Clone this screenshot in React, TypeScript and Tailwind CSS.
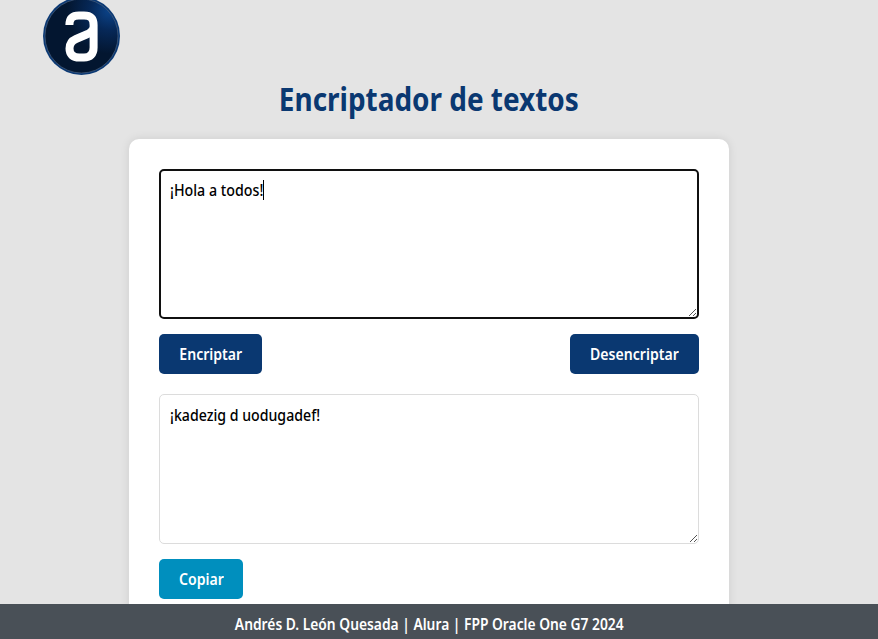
function Grip() {
  return (
    <svg className="absolute bottom-0 right-0 h-[9px] w-[9px]" viewBox="0 0 9 9" stroke="#555" strokeWidth="1" fill="none">
      <path d="M1 8 8 1M5 8 8 5" />
    </svg>
  );
}

function Logo() {
  return (
    <svg className="-mt-[3px] ml-[43px] h-[78px] w-[77px] shrink-0" viewBox="0 0 77 78">
      <defs>
        <radialGradient id="disc" cx="0.88" cy="0.16" r="0.58">
          <stop offset="0" stopColor="#0b4389" />
          <stop offset="0.45" stopColor="#062858" />
          <stop offset="1" stopColor="#031630" />
        </radialGradient>
      </defs>
      <ellipse cx="38.5" cy="39" rx="38.5" ry="39" fill="#0b3974" />
      <ellipse cx="38.5" cy="39" rx="36.5" ry="37" fill="url(#disc)" stroke="#526682" strokeWidth="0.6" />
      <path
        d="M26.4 28C26.4 21.5 29.5 18.4 36 18.4H41C47.5 18.4 50.6 21.6 50.6 28V50.5C50.6 57.2 47.2 60.6 41 60.6H36.3C29.8 60.6 26.5 57.3 26.5 51.5C26.5 46.3 28.8 43.8 33 42L43.5 37.5C47 36 50 34.5 50.6 30"
        fill="none"
        stroke="#fff"
        strokeWidth="8"
      />
    </svg>
  );
}

const button = "flex h-10 items-center justify-center rounded-[5px] pb-px text-base font-semibold text-white";

export default function App() {
  return (
    <div className="relative flex h-[639px] w-[878px] flex-col overflow-hidden bg-[#e4e4e4] font-['Noto_Sans','Open_Sans',sans-serif]">
      <header className="flex h-[75px]">
        <Logo />
      </header>
      <main className="flex w-[858px] flex-1 flex-col items-center">
        <h1 className="flex h-[64px] w-[300px] items-start justify-center whitespace-nowrap pt-[4px] text-[32px] font-bold leading-[40px] text-[#0a3871]">
          <span className="inline-block scale-x-[0.873]">Encriptador de textos</span>
        </h1>
        <section className="flex h-[540px] w-[600px] shrink-0 flex-col rounded-[10px] bg-white p-[30px] shadow-[0_0_10px_rgba(0,0,0,0.1)]">
          <div className="relative h-[150px] shrink-0 rounded-[5px] border-2 border-[#101010] pl-[9px] pt-[9px]">
            <div className="flex h-5 w-[94px] items-center border-r border-black">
              <span className="inline-block origin-left scale-x-[0.89] whitespace-nowrap text-base font-medium leading-5">¡Hola a todos!</span>
            </div>
            <Grip />
          </div>
          <div className="mt-[15px] flex shrink-0 justify-between">
            <button className={`${button} w-[103px] bg-[#0a3871]`}>
              <span className="inline-block scale-x-[0.88]">Encriptar</span>
            </button>
            <button className={`${button} w-[129px] bg-[#0a3871]`}>
              <span className="inline-block scale-x-[0.88]">Desencriptar</span>
            </button>
          </div>
          <div className="relative mt-5 h-[150px] shrink-0 rounded-[5px] border border-[#dcdcdc] pl-[10px] pt-[10px]">
            <span className="block origin-left scale-x-[0.885] whitespace-nowrap text-base font-medium leading-5">¡kadezig d uodugadef!</span>
            <Grip />
          </div>
          <button className={`${button} mt-[15px] w-[84px] shrink-0 bg-[#008fbe]`}>
            <span className="inline-block scale-x-[0.88]">Copiar</span>
          </button>
        </section>
      </main>
      <footer className="absolute bottom-0 left-0 flex h-[35px] w-full bg-[#495057]">
        <div className="flex w-[858px] items-center justify-center pt-[4px]">
          <span className="inline-block scale-x-[0.863] whitespace-nowrap text-base font-semibold text-white">Andrés D. León Quesada | Alura | FPP Oracle One G7 2024</span>
        </div>
      </footer>
    </div>
  );
}
